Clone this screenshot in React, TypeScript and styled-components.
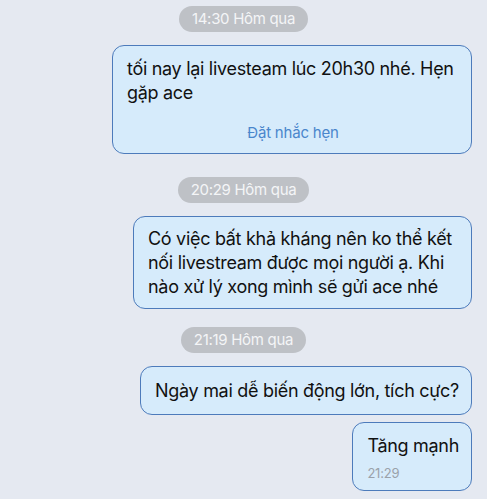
import styled, { createGlobalStyle } from 'styled-components';

const GlobalStyle = createGlobalStyle`
	body {
		margin: 0;
		background: #e5e9f1;
		font-family: Inter, "Noto Sans", sans-serif;
	}
`;

const Thread = styled.main`
	display: flex;
	flex-direction: column;
	align-items: flex-end;
	padding: 6px 15px 0 0;
	min-height: 499px;
	box-sizing: border-box;
`;

const TimePill = styled.div<{ $top: number }>`
	align-self: center;
	margin: ${(p) => p.$top}px 0 13px 15px;
	height: 26px;
	padding: 0 13px;
	border-radius: 13px;
	background: #bec1c6;
	color: #f4f5f7;
	font-size: 15px;
	letter-spacing: -0.3px;
	line-height: 26px;
`;

const Bubble = styled.div<{ $width?: number; $gap?: number; $padY?: [number, number] }>`
	box-sizing: border-box;
	width: ${(p) => (p.$width ? `${p.$width}px` : 'auto')};
	margin-top: ${(p) => p.$gap ?? 0}px;
	padding: ${(p) => (p.$padY ? p.$padY[0] : 12)}px 12px ${(p) => (p.$padY ? p.$padY[1] : 11)}px 14px;
	background: #d6ebfb;
	border: 1px solid #4d7bbb;
	border-radius: 12px;
	color: #111;
	font-size: 18px;
	letter-spacing: -0.3px;
	line-height: 24px;
`;

const Action = styled.div`
	margin-top: 18px;
	text-align: center;
	color: #4a86cc;
	font-size: 15px;
	letter-spacing: -0.2px;
	line-height: 20px;
`;

const Stamp = styled.div`
	margin-top: 7px;
	color: #9aa1aa;
	font-size: 13px;
	letter-spacing: -0.2px;
	line-height: 16px;
`;

export default function App() {
	return (
		<Thread>
			<GlobalStyle />
			<TimePill $top={0}>14:30 Hôm qua</TimePill>
			<Bubble $width={360} $padY={[11, 10]}>
				tối nay lại livesteam lúc 20h30 nhé. Hẹn gặp ace
				<Action>Đặt nhắc hẹn</Action>
			</Bubble>
			<TimePill $top={23}>20:29 Hôm qua</TimePill>
			<Bubble $width={339} $padY={[10, 9]}>
				Có việc bất khả kháng nên ko thể kết nối livestream được mọi người ạ. Khi nào xử lý xong mình sẽ gửi ace nhé
			</Bubble>
			<TimePill $top={18}>21:19 Hôm qua</TimePill>
			<Bubble>Ngày mai dễ biến động lớn, tích cực?</Bubble>
			<Bubble $gap={7} $padY={[11, 9]}>
				Tăng mạnh
				<Stamp>21:29</Stamp>
			</Bubble>
		</Thread>
	);
}
